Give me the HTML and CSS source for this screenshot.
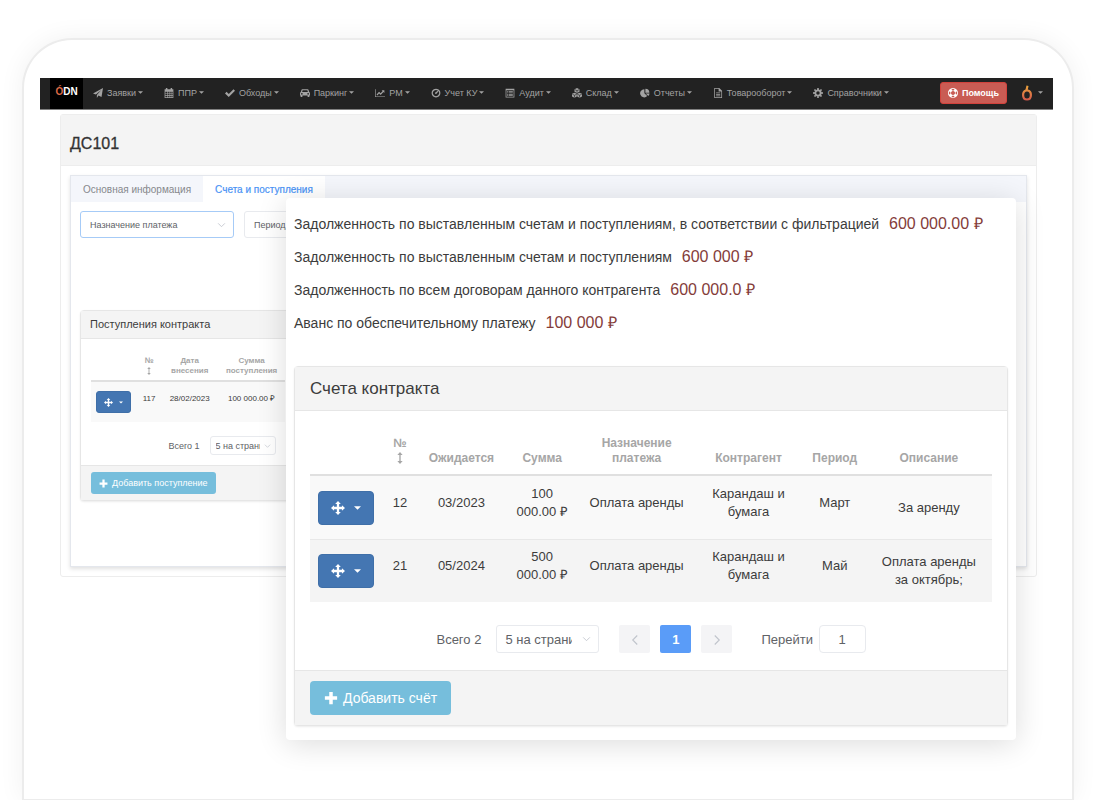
FILE: index.html
```html
<!DOCTYPE html>
<html lang="ru">

<head>
    <meta charset="UTF-8">
    <meta name="viewport" content="width=device-width, initial-scale=1.0">
    <title>ДС101</title>
    <link rel="stylesheet" href="styles.css">
</head>

<body>
    <svg class="sprite" aria-hidden="true">
        <symbol id="i-plane" viewBox="0 0 16 16"><path d="M16 0 13.6 14.2 8.6 12 6.2 15.8V11.2L13.2 3 4.6 10.3 0 8.6Z"/></symbol>
        <symbol id="i-calendar" viewBox="0 0 16 16"><path fill-rule="evenodd" d="M3 2V0h2.4v2h5.2V0H13v2h2v14H1V2ZM2.2 6v2.2h2.6V6Zm3.6 0v2.2h2V6Zm3 0v2.2h2V6Zm3 0v2.2h2V6ZM2.2 9.2v2h2.6v-2Zm3.6 0v2h2v-2Zm3 0v2h2v-2Zm3 0v2h2v-2ZM2.2 12.2v2.4h2.6v-2.4Zm3.6 0v2.4h2v-2.4Zm3 0v2.4h2v-2.4Zm3 0v2.4h2v-2.4Z"/></symbol>
        <symbol id="i-check" viewBox="0 0 16 16"><path d="M0 8.6 2.5 6 6 9.5 13.6 2 16 4.500 6 14.400Z"/></symbol>
        <symbol id="i-car" viewBox="0 0 16 16"><path fill-rule="evenodd" d="M3.600 2h8.800q1 0 1.300 1L14.700 6.500Q16 7 16 8.500V12h-1v2.200h-2.800V12H3.800v2.200H1V12H0V8.500Q0 7 1.300 6.500L2.300 3q.3-1 1.300-1Zm.6 1.700-.8 2.800h9.200l-.8-2.800ZM3 8a1.200 1.200 0 1 0 .01 0ZM13 8a1.200 1.200 0 1 0 .01 0Z"/></symbol>
        <symbol id="i-chart" viewBox="0 0 16 16"><path d="M0 2h1v11.500h15v1H0ZM2.500 10.500 6.500 6 9 8.400 12 5 10.800 3.700H15V8L13.500 6.500 9 11 6.500 8.700 3.700 12Z"/></symbol>
        <symbol id="i-clock" viewBox="0 0 16 16"><path fill-rule="evenodd" d="M8 1a7 7 0 1 1-.01 0ZM8 3a5 5 0 1 0 .01 0Z"/><path d="m10.800 4.400 1 1-3.400 4-1.800-.2-.2-1.700Z"/></symbol>
        <symbol id="i-list" viewBox="0 0 16 16"><path fill-rule="evenodd" d="M1 1h14v14H1Zm1.200 2.600v10.200h11.600V3.600Z"/><path d="M3.500 5H5v1.200H3.500ZM6 5h6.500v1.200H6ZM3.500 7.200H5v1.200H3.500Zm2.500 0h6.500v1.200H6ZM3.500 9.400H5v1.200H3.500Zm2.500 0h6.500v1.200H6ZM3.500 11.600H5v1.200H3.500Zm2.500 0h6.500v1.200H6Z"/></symbol>
        <symbol id="i-cubes" viewBox="0 0 16 16"><path d="m8 0 4 1.800v4L8 7.800 4 5.800v-4ZM4 7.400l3.700 1.800v4.300L4 15.500 0 13.500V9.200ZM12 7.400l4 1.800v4.300l-4 2-3.700-2V9.200Z"/><path class="cut" d="m4.500 2.600 3.500 1.600 3.500-1.600M8 4.200v3.200M.5 10 4 11.600 7.500 10M4 11.600v3.600M8.600 10l3.400 1.600 3.600-1.600M12 11.600v3.600"/></symbol>
        <symbol id="i-pie" viewBox="0 0 16 16"><path d="M7 2v6.400l4.500 4.500A6.500 6.500 0 1 1 7 2ZM8.600 1a6.400 6.400 0 0 1 6.400 6.400H8.600ZM9 8.800h6.300q-.1 2.300-2 3.900Z"/></symbol>
        <symbol id="i-file" viewBox="0 0 16 16"><path fill-rule="evenodd" d="M2 0h8l4.500 4.500V16H2Zm1.200 1.200v13.600h10.100V5.600H9V1.200Z"/><path d="M5 7h6.500v1.300H5ZM5 9.400h6.500v1.300H5ZM5 11.800h6.500v1.300H5Z"/></symbol>
        <symbol id="i-cog" viewBox="0 0 16 16"><circle class="ring" cx="8" cy="8" r="4.200"/><path d="M6.800 0h2.400l.3 3h-3ZM6.800 16h2.400l.3-3h-3ZM0 6.800v2.400l3 .3v-3ZM16 6.800v2.400l-3 .3v-3ZM1.500 3.200l1.700-1.700 2.300 1.900-2.100 2.100ZM14.500 3.200l-1.700-1.700-2.300 1.900 2.100 2.100ZM1.500 12.800l1.700 1.700 2.300-1.900-2.100-2.100ZM14.500 12.800l-1.700 1.700-2.300-1.900 2.100-2.100Z"/></symbol>
        <symbol id="i-help" viewBox="0 0 16 16"><path fill-rule="evenodd" d="M8 0a8 8 0 1 1-.01 0ZM8 4.800a3.200 3.200 0 1 0 .01 0ZM5.700 1.800 6.500 3.800h3l.8-2q-2.300-.9-4.600 0ZM5.700 14.200l.8-2h3l.8 2q-2.300.9-4.600 0ZM1.800 5.700l2 .8v3l-2 .8q-.9-2.300 0-4.600ZM14.200 5.700l-2 .8v3l2 .8q.9-2.300 0-4.600Z"/></symbol>
        <symbol id="i-move" viewBox="0 0 16 16"><path d="m8 0 3.200 3.500H9.300v3.200h3.200V4.800L16 8l-3.500 3.200V9.300H9.300v3.200h1.900L8 16l-3.200-3.500h1.900V9.300H3.500v1.900L0 8l3.500-3.200v1.900h3.200V3.500H4.800Z"/></symbol>
        <symbol id="i-plus" viewBox="0 0 16 16"><path d="M6 1h4v5h5v4h-5v5H6v-5H1V6h5Z"/></symbol>
        <symbol id="i-sort" viewBox="0 0 8 16"><path d="M4 0 7.500 4H4.900v8h2.600L4 16 .5 12h2.600V4H.5Z"/></symbol>
        <symbol id="i-caret" viewBox="0 0 8 4"><path d="M0 0h8L4 4Z"/></symbol>
        <symbol id="i-down" viewBox="0 0 16 16"><path class="line" d="m2 5 6 6 6-6"/></symbol>
        <symbol id="i-left" viewBox="0 0 16 16"><path class="line" d="m11 2-6 6 6 6"/></symbol>
        <symbol id="i-right" viewBox="0 0 16 16"><path class="line" d="m5 2 6 6-6 6"/></symbol>
    </svg>

    <div class="device">
        <header class="navbar">
            <a class="brand" href="#"><span class="brand-accent">Ó</span>DN</a>
            <nav class="menu">
                <a href="#"><svg class="icon"><use href="#i-plane"/></svg>Заявки<svg class="caret"><use href="#i-caret"/></svg></a>
                <a href="#"><svg class="icon"><use href="#i-calendar"/></svg>ППР<svg class="caret"><use href="#i-caret"/></svg></a>
                <a href="#"><svg class="icon"><use href="#i-check"/></svg>Обходы<svg class="caret"><use href="#i-caret"/></svg></a>
                <a href="#"><svg class="icon"><use href="#i-car"/></svg>Паркинг<svg class="caret"><use href="#i-caret"/></svg></a>
                <a href="#"><svg class="icon"><use href="#i-chart"/></svg>РМ<svg class="caret"><use href="#i-caret"/></svg></a>
                <a href="#"><svg class="icon"><use href="#i-clock"/></svg>Учет КУ<svg class="caret"><use href="#i-caret"/></svg></a>
                <a href="#"><svg class="icon"><use href="#i-list"/></svg>Аудит<svg class="caret"><use href="#i-caret"/></svg></a>
                <a href="#"><svg class="icon"><use href="#i-cubes"/></svg>Склад<svg class="caret"><use href="#i-caret"/></svg></a>
                <a href="#"><svg class="icon"><use href="#i-pie"/></svg>Отчеты<svg class="caret"><use href="#i-caret"/></svg></a>
                <a href="#"><svg class="icon"><use href="#i-file"/></svg>Товарооборот<svg class="caret"><use href="#i-caret"/></svg></a>
                <a href="#"><svg class="icon"><use href="#i-cog"/></svg>Справочники<svg class="caret"><use href="#i-caret"/></svg></a>
            </nav>
            <button type="button" class="help"><svg class="icon"><use href="#i-help"/></svg>Помощь</button>
            <a class="profile" href="#" aria-label="Профиль">
                <svg class="profile-logo" viewBox="0 0 12 16">
                    <defs>
                        <linearGradient id="flame" x1="0" y1="0" x2="0" y2="1">
                            <stop offset="0" stop-color="#eba63c"/>
                            <stop offset="1" stop-color="#d4574b"/>
                        </linearGradient>
                    </defs>
                    <path fill="url(#flame)" fill-rule="evenodd" d="M5.500.5 7.500 1 6.800 4.400Q11 5 11 9.900 11 15.500 6 15.500T1 9.900Q1 5.800 4.500 4.600ZM6 6.400Q3.200 6.400 3.200 9.900T6 13.400 8.800 9.900 6 6.400Z"/>
                </svg>
                <svg class="caret"><use href="#i-caret"/></svg>
            </a>
        </header>

        <main class="page">
            <h1 class="page-title">ДС101</h1>
            <div class="page-body">
                <div class="tabs">
                    <div class="tab-bar">
                        <button type="button" class="tab">Основная информация</button>
                        <button type="button" class="tab active">Счета и поступления</button>
                    </div>
                    <div class="tab-content">
                        <div class="filters">
                            <div class="select-box focused">
                                <select aria-label="Назначение платежа">
                                    <option>Назначение платежа</option>
                                </select>
                                <svg class="arrow"><use href="#i-down"/></svg>
                            </div>
                            <input class="period" type="text" value="Период" aria-label="Период">
                        </div>

                        <div class="columns">
                            <section class="panel small">
                                <h2 class="panel-title">Поступления контракта</h2>
                                <div class="panel-body">
                                    <table>
                                        <colgroup>
                                            <col class="r-action">
                                            <col class="r-number">
                                            <col class="r-date">
                                            <col class="r-sum">
                                        </colgroup>
                                        <thead>
                                            <tr>
                                                <th></th>
                                                <th>№<svg class="sort"><use href="#i-sort"/></svg></th>
                                                <th>Дата внесения</th>
                                                <th>Сумма поступления</th>
                                            </tr>
                                        </thead>
                                        <tbody>
                                            <tr>
                                                <td class="middle"><button type="button" class="action" aria-label="Действия"><svg class="icon"><use href="#i-move"/></svg><svg class="caret"><use href="#i-caret"/></svg></button></td>
                                                <td>117</td>
                                                <td>28/02/2023</td>
                                                <td>100 000.00 ₽</td>
                                            </tr>
                                        </tbody>
                                    </table>
                                    <div class="pager">
                                        <span>Всего 1</span>
                                        <div class="select-box">
                                            <select aria-label="Записей на странице">
                                                <option>5 на странице</option>
                                            </select>
                                            <svg class="arrow"><use href="#i-down"/></svg>
                                        </div>
                                    </div>
                                </div>
                                <div class="panel-footer">
                                    <button type="button" class="add"><svg class="icon"><use href="#i-plus"/></svg>Добавить поступление</button>
                                </div>
                            </section>
                        </div>
                    </div>
                </div>
            </div>
        </main>

        <div class="popup">
            <ul class="debts">
                <li>Задолженность по выставленным счетам и поступлениям, в соответствии с фильтрацией <strong>600 000.00 ₽</strong></li>
                <li>Задолженность по выставленным счетам и поступлениям <strong>600 000 ₽</strong></li>
                <li>Задолженность по всем договорам данного контрагента <strong>600 000.0 ₽</strong></li>
                <li>Аванс по обеспечительному платежу <strong>100 000 ₽</strong></li>
            </ul>

            <section class="panel">
                <h2 class="panel-title">Счета контракта</h2>
                <div class="panel-body">
                    <table>
                        <colgroup>
                            <col class="c-action">
                            <col class="c-number">
                            <col class="c-date">
                            <col class="c-sum">
                            <col class="c-purpose">
                            <col class="c-party">
                            <col class="c-period">
                            <col class="c-note">
                        </colgroup>
                        <thead>
                            <tr>
                                <th></th>
                                <th>№<svg class="sort"><use href="#i-sort"/></svg></th>
                                <th>Ожидается</th>
                                <th>Сумма</th>
                                <th>Назначение платежа</th>
                                <th>Контрагент</th>
                                <th>Период</th>
                                <th>Описание</th>
                            </tr>
                        </thead>
                        <tbody>
                            <tr>
                                <td class="middle"><button type="button" class="action" aria-label="Действия"><svg class="icon"><use href="#i-move"/></svg><svg class="caret"><use href="#i-caret"/></svg></button></td>
                                <td>12</td>
                                <td>03/2023</td>
                                <td>100 000.00&nbsp;₽</td>
                                <td>Оплата аренды</td>
                                <td>Карандаш и бумага</td>
                                <td>Март</td>
                                <td class="middle">За аренду</td>
                            </tr>
                            <tr>
                                <td class="middle"><button type="button" class="action" aria-label="Действия"><svg class="icon"><use href="#i-move"/></svg><svg class="caret"><use href="#i-caret"/></svg></button></td>
                                <td>21</td>
                                <td>05/2024</td>
                                <td>500 000.00&nbsp;₽</td>
                                <td>Оплата аренды</td>
                                <td>Карандаш и бумага</td>
                                <td>Май</td>
                                <td class="middle">Оплата аренды за октябрь;</td>
                            </tr>
                        </tbody>
                    </table>
                    <div class="pager">
                        <span>Всего 2</span>
                        <div class="select-box">
                            <select aria-label="Записей на странице">
                                <option>5 на странице</option>
                            </select>
                            <svg class="arrow"><use href="#i-down"/></svg>
                        </div>
                        <div class="pages">
                            <button type="button" aria-label="Назад"><svg class="arrow"><use href="#i-left"/></svg></button>
                            <button type="button" class="current">1</button>
                            <button type="button" aria-label="Вперёд"><svg class="arrow"><use href="#i-right"/></svg></button>
                        </div>
                        <label class="jump">Перейти <input type="text" value="1"></label>
                    </div>
                </div>
                <div class="panel-footer">
                    <button type="button" class="add"><svg class="icon"><use href="#i-plus"/></svg>Добавить счёт</button>
                </div>
            </section>
        </div>
    </div>
</body>

</html>
```
FILE: styles.css
```css
* {
    box-sizing: border-box;
}

body {
    margin: 0;
    padding: 38px 26px 0 22px;
    background-color: #fff;
    color: #3c3c3c;
    font-family: "Liberation Sans", Arial, sans-serif;
    font-size: 14px;
}

button,
input,
select {
    font: inherit;
    color: inherit;
}

button {
    cursor: pointer;
}

a {
    text-decoration: none;
}

svg {
    fill: currentColor;
    flex: none;
}

.sprite {
    display: none;
}

.line {
    fill: none;
    stroke: currentColor;
    stroke-width: 1.5;
}

.cut {
    fill: none;
    stroke: #222;
    stroke-width: 1;
}

.ring {
    fill: none;
    stroke: currentColor;
    stroke-width: 3;
}

.icon {
    width: 10px;
    height: 10px;
}

.caret {
    width: 5px;
    height: 3px;
}

/* Device frame */
.device {
    position: relative;
    min-height: calc(100vh - 38px);
    padding: 38px 19px 0 16px;
    border: 2px solid #ececec;
    border-bottom-width: 1px;
    border-radius: 50px 50px 0 0;
    background-color: #fff;
    box-shadow: 0 0 26px rgba(0, 0, 0, 0.06);
}

/* Top menu */
.navbar {
    display: flex;
    align-items: center;
    height: 32px;
    padding: 0 10px;
    border-bottom: 1px solid #808080;
    background-color: #222;
    color: #a3a3a3;
    font-size: 9px;
}

.navbar a {
    color: inherit;
}

.brand {
    align-self: stretch;
    width: 33px;
    background-color: #000;
    font-size: 10px;
    font-weight: bold;
    line-height: 28px;
    text-align: center;
}

.navbar .brand {
    color: #fff;
}

.brand-accent {
    color: #dc6a45;
}

.menu {
    display: flex;
    flex: 1;
    justify-content: space-between;
    margin: 0 51px 0 10px;
    padding-bottom: 2px;
}

.menu a {
    display: flex;
    align-items: center;
    white-space: nowrap;
}

.menu .icon {
    margin-right: 4px;
}

.menu .caret {
    margin-left: 2px;
}

.help {
    display: flex;
    align-items: center;
    gap: 4px;
    height: 22px;
    margin-bottom: 2px;
    padding: 0 7px;
    border: 1px solid #d2423c;
    border-radius: 3px;
    background-color: #c95c54;
    color: #fff;
    font-weight: bold;
}

.profile {
    display: flex;
    align-items: center;
    gap: 5px;
    margin: 0 0 2px 14px;
}

.profile-logo {
    width: 12px;
    height: 16px;
}

/* Page */
.page {
    margin: 4px 16px 0 20px;
    border: 1px solid #ededed;
    border-radius: 3px;
}

.page-title {
    margin: 0;
    padding: 8px 9px 0;
    border-bottom: 1px solid #ededed;
    background-color: #f4f4f4;
    color: #333;
    font-size: 16px;
    font-weight: normal;
    line-height: 42px;
    -webkit-text-stroke: 0.3px #333;
}

.page-body {
    padding: 9px;
}

.tabs {
    min-height: 392px;
    border: 1px solid #e4e7ed;
    box-shadow: 0 2px 4px rgba(0, 0, 0, 0.12);
    font-size: 9px;
}

.tab-bar {
    display: flex;
    background-color: #f4f6fb;
    font-size: 10px;
}

.tab {
    height: 26px;
    padding: 0 12px;
    border: 0;
    background: none;
    color: #86888c;
}

.tab.active {
    background-color: #fff;
    color: #4a93f5;
    -webkit-text-stroke: 0.2px #4a93f5;
}

.tab-content {
    padding: 9px;
    color: #606266;
}

.filters {
    display: flex;
    gap: 10px;
    margin-bottom: 72px;
}

.select-box {
    position: relative;
    border: 1px solid #e8eaee;
    border-radius: 3px;
    background-color: #fff;
}

.select-box select {
    display: block;
    width: 100%;
    height: 100%;
    padding: 0;
    border: 0;
    outline: 0;
    background: none;
    appearance: none;
}

.select-box .arrow {
    position: absolute;
    top: 50%;
    right: 7px;
    transform: translateY(-50%);
}

.arrow {
    width: 9px;
    height: 9px;
    color: #c0c4cc;
}

.filters .select-box {
    width: 154px;
    height: 27px;
    padding: 0 20px 0 9px;
}

.filters .focused {
    border-color: #a6cbf7;
}

.period {
    width: 154px;
    height: 27px;
    padding: 0 9px;
    border: 1px solid #e8eaee;
    border-radius: 3px;
}

.columns {
    display: grid;
    grid-template-columns: 23% 1fr;
}

/* Panels */
.panel {
    border: 1px solid #e6e6e6;
    border-radius: 4px;
    background-color: #fff;
    box-shadow: 0 1px 2px rgba(0, 0, 0, 0.08);
}

.panel-title {
    margin: 0;
    padding: 0 15px;
    border-bottom: 1px solid #e6e6e6;
    background-color: #f4f4f4;
    color: #3c3c3c;
    font-size: 17px;
    font-weight: normal;
    line-height: 43px;
}

.panel-body {
    padding: 15px 15px 0;
}

.panel-footer {
    padding: 10px 15px;
    border-top: 1px solid #e6e6e6;
    background-color: #f4f4f4;
}

.panel table {
    width: 100%;
    border-collapse: separate;
    border-spacing: 0;
    table-layout: fixed;
    font-size: 13px;
    line-height: 18px;
    text-align: center;
}

.panel th {
    height: 50px;
    padding: 0 4px 8px;
    border-bottom: 2px solid #e0e0e0;
    color: #a6a6a6;
    font-size: 12px;
    line-height: 15px;
    vertical-align: bottom;
}

.panel td {
    height: 63px;
    padding: 8px 4px 18px;
    background-color: #f9f9f9;
    color: #3c3c3c;
    vertical-align: middle;
}

.panel td.middle {
    padding: 8px;
}

.panel tr + tr td {
    border-top: 1px solid #e8e8e8;
    background-color: #f4f4f4;
}

.sort {
    display: block;
    width: 6px;
    height: 12px;
    margin: 1px auto 2px;
}

.c-action { width: 10.5%; }
.c-number { width: 5.4%; }
.c-date { width: 12.6%; }
.c-sum { width: 11.1%; }
.c-purpose { width: 16.6%; }
.c-party { width: 16.2%; }
.c-period { width: 9.1%; }
.c-note { width: 18.5%; }

.action {
    display: flex;
    align-items: center;
    justify-content: center;
    gap: 9px;
    width: 56px;
    height: 34px;
    padding: 0;
    border: 1px solid #3f6fa8;
    border-radius: 4px;
    background-color: #4476b2;
    color: #fff;
}

.action .icon {
    width: 14px;
    height: 14px;
}

.action .caret {
    width: 7px;
    height: 4px;
}

.add {
    display: flex;
    align-items: center;
    gap: 5px;
    height: 34px;
    padding: 0 14px;
    border: 0;
    border-radius: 4px;
    background-color: #76bedc;
    color: #fff;
    font-size: 14px;
}

.add .icon {
    width: 14px;
    height: 14px;
}

/* Pagination */
.pager {
    display: flex;
    align-items: center;
    justify-content: center;
    height: 68px;
    padding-top: 6px;
    color: #606266;
    font-size: 13px;
    white-space: nowrap;
}

.pager .select-box {
    width: 103px;
    height: 28px;
    margin: 0 20px 0 15px;
    padding: 0 26px 0 8px;
}

.pages {
    display: flex;
    gap: 10px;
}

.pages button {
    width: 31px;
    height: 28px;
    padding: 0;
    border: 0;
    border-radius: 2px;
    background-color: #f4f4f6;
}

.pages .arrow {
    width: 12px;
    height: 12px;
    vertical-align: middle;
}

.pages .current {
    background-color: #5a9cf8;
    color: #fff;
    font-weight: bold;
}

.jump {
    margin-left: 29px;
}

.jump input {
    width: 47px;
    height: 28px;
    margin-left: 2px;
    border: 1px solid #e8eaee;
    border-radius: 4px;
    text-align: center;
}

/* Compact panel on the page behind the popup */
.small .panel-title {
    padding: 0 9px;
    font-size: 11px;
    line-height: 27px;
}

.small .panel-body {
    padding: 11px 10px 0;
}

.small table {
    font-size: 8px;
    line-height: 12px;
}

.small th {
    height: 32px;
    padding: 0 0 4px;
    font-size: 8px;
    line-height: 10px;
}

.small td {
    height: 40px;
    padding: 4px 0 10px;
}

.small td.middle {
    padding: 4px 5px;
}

.small .sort {
    width: 4px;
    height: 8px;
    margin: 1px auto;
}

.r-action { width: 24%; }
.r-number { width: 12%; }
.r-date { width: 30%; }
.r-sum { width: 34%; }

.small .action {
    gap: 6px;
    width: 35px;
    height: 22px;
    border-radius: 3px;
}

.small .action .icon {
    width: 9px;
    height: 9px;
}

.small .action .caret {
    width: 4px;
    height: 3px;
}

.small .pager {
    justify-content: flex-end;
    height: 43px;
    padding: 4px 9px 0 0;
    font-size: 9px;
}

.small .pager .select-box {
    width: 66px;
    height: 19px;
    margin: 0 0 0 10px;
    padding: 0 15px 0 5px;
}

.small .pager .arrow {
    right: 4px;
    width: 7px;
    height: 7px;
}

.small .panel-footer {
    padding: 6px 10px;
}

.small .add {
    gap: 4px;
    height: 22px;
    padding: 0 8px;
    border-radius: 3px;
    font-size: 9px;
}

.small .add .icon {
    width: 9px;
    height: 9px;
}

/* Popup over the page */
.popup {
    position: absolute;
    top: 158px;
    right: 56px;
    left: 262px;
    padding: 10px 8px 14px;
    border-radius: 4px;
    background-color: #fff;
    box-shadow: 0 4px 30px rgba(0, 0, 0, 0.14);
}

.debts {
    margin: 0 0 26px;
    padding: 0;
    list-style: none;
    font-size: 14px;
    line-height: 33px;
    white-space: nowrap;
}

.debts strong {
    margin-left: 6px;
    color: #843c3a;
    font-size: 16px;
    font-weight: normal;
    line-height: 1;
}
```
